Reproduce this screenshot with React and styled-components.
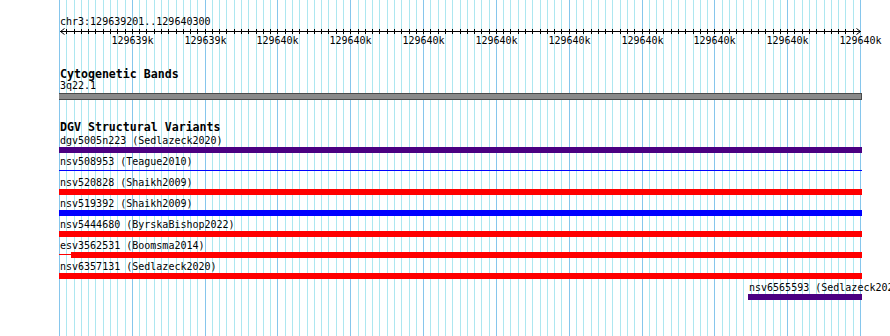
import React from 'react';
import styled, { createGlobalStyle } from 'styled-components';

const GlobalStyle = createGlobalStyle`
  html, body {
    margin: 0;
    padding: 0;
    background: #ffffff;
    overflow: hidden;
  }
  body {
    font-family: 'DejaVu Sans Mono', 'Liberation Mono', monospace;
    font-size: 10px;
    color: #000000;
  }
`;

const ORIGIN = 59;
const GRID_END = 860;
const STEPS = 110;
const TRACK_WIDTH = 803;

const gridX = (i) => Math.round(ORIGIN + (i * (GRID_END - ORIGIN)) / STEPS);

const Page = styled.div`
  position: relative;
  width: 890px;
  height: 336px;
  overflow: hidden;
  background: #ffffff;
`;

const GridLayer = styled.svg`
  position: absolute;
  left: 0;
  top: 0;
  width: 890px;
  height: 336px;
`;

const Content = styled.div`
  position: relative;
  padding: 17px 0 0 ${ORIGIN}px;
  display: flex;
  flex-direction: column;
`;

const RefLabel = styled.div`
  line-height: 10px;
  height: 11px;
  padding-left: 1px;
  white-space: nowrap;
`;

const Scale = styled.div`
  position: relative;
  width: ${TRACK_WIDTH}px;
  height: 19px;
`;

const ScaleSvg = styled.svg`
  display: block;
  width: ${TRACK_WIDTH}px;
  height: 19px;
`;

const TickLabel = styled.span`
  position: absolute;
  top: 8px;
  line-height: 10px;
  transform: translateX(-50%);
  white-space: nowrap;
`;

const Track = styled.section`
  display: flex;
  flex-direction: column;
  margin-top: 22px;
`;

const TrackTitle = styled.h2`
  margin: 0;
  font-size: 11.6px;
  font-weight: bold;
  line-height: 11px;
  height: 12px;
  padding-left: 1px;
  white-space: nowrap;
`;

const BandLabel = styled.div`
  line-height: 10px;
  height: 10px;
  padding-left: 1px;
`;

const BandBar = styled.div`
  margin-top: 2px;
  width: ${TRACK_WIDTH}px;
  height: 7px;
  box-sizing: border-box;
  background: #8a8a8a;
  border: 1px solid #4a4a4a;
  border-left: none;
`;

const Rows = styled.div`
  display: flex;
  flex-direction: column;
  margin-top: 2px;
`;

const FeatureRow = styled.div`
  display: flex;
  flex-direction: column;
  height: 21px;
`;

const FeatureLabel = styled.div`
  line-height: 10px;
  height: 10px;
  padding-left: 1px;
  white-space: nowrap;
`;

const Glyph = styled.div`
  display: flex;
  align-items: flex-start;
  height: 6px;
  margin-top: 1px;
`;

const Block = styled.div`
  height: 6px;
  flex: none;
  background: ${(p) => p.color};
`;

const Line = styled.div`
  height: 1px;
  margin-top: 2px;
  flex: none;
  background: ${(p) => p.color};
`;

const PURPLE = '#4b0082';
const RED = '#ff0000';
const BLUE = '#0000ff';

const features = [
  { name: 'dgv5005n223', study: 'Sedlazeck2020', color: PURPLE, start: 0, end: 803 },
  { name: 'nsv508953', study: 'Teague2010', color: BLUE, start: 0, end: 803, thin: true },
  { name: 'nsv520828', study: 'Shaikh2009', color: RED, start: 0, end: 803 },
  { name: 'nsv519392', study: 'Shaikh2009', color: BLUE, start: 0, end: 803 },
  { name: 'nsv5444680', study: 'ByrskaBishop2022', color: RED, start: 0, end: 803 },
  { name: 'esv3562531', study: 'Boomsma2014', color: RED, start: 0, end: 803, lead: 12 },
  { name: 'nsv6357131', study: 'Sedlazeck2020', color: RED, start: 0, end: 803 },
  { name: 'nsv6565593', study: 'Sedlazeck2020', color: PURPLE, start: 689, end: 803 },
];

const tickLabels = [
  '129639k', '129639k', '129640k', '129640k', '129640k', '129640k',
  '129640k', '129640k', '129640k', '129640k', '129640k',
];

function Grid() {
  const lines = [];
  for (let i = 0; i <= STEPS; i += 1) {
    const x = gridX(i) + 0.5;
    lines.push(
      <line
        key={i}
        x1={x}
        x2={x}
        y1={0}
        y2={336}
        stroke={i % 10 === 0 ? '#86c6ec' : '#ade7f0'}
        strokeWidth={1}
      />
    );
  }
  return (
    <GridLayer viewBox="0 0 890 336" shapeRendering="crispEdges">
      {lines}
    </GridLayer>
  );
}

function Ruler() {
  const ticks = [];
  for (let i = 1; i < STEPS; i += 1) {
    const x = gridX(i) - ORIGIN + 0.5;
    ticks.push(<line key={i} x1={x} x2={x} y1={1} y2={6} stroke="#000" />);
  }
  return (
    <>
      <RefLabel>chr3:129639201..129640300</RefLabel>
      <Scale>
        <ScaleSvg viewBox={`0 0 ${TRACK_WIDTH} 19`}>
          <g shapeRendering="crispEdges">
            <line x1={1} x2={802} y1={3.5} y2={3.5} stroke="#000" />
            {ticks}
          </g>
          <path d="M5.5 0.5 L1.5 3.5 L5.5 6.5" fill="none" stroke="#000" />
          <path d="M797.5 0.5 L801.5 3.5 L797.5 6.5" fill="none" stroke="#000" />
        </ScaleSvg>
        {tickLabels.map((label, k) => (
          <TickLabel key={k} style={{ left: gridX((k + 1) * 10) - ORIGIN + 0.5 }}>
            {label}
          </TickLabel>
        ))}
      </Scale>
    </>
  );
}

function Feature({ f }) {
  const lead = f.lead || 0;
  return (
    <FeatureRow>
      <FeatureLabel style={{ marginLeft: f.start }}>
        {f.name} ({f.study})
      </FeatureLabel>
      <Glyph style={{ marginLeft: f.start }}>
        {lead > 0 && <Line color={f.color} style={{ width: lead }} />}
        {f.thin ? (
          <Line color={f.color} style={{ width: f.end - f.start - lead }} />
        ) : (
          <Block color={f.color} style={{ width: f.end - f.start - lead }} />
        )}
      </Glyph>
    </FeatureRow>
  );
}

export default function App() {
  return (
    <Page>
      <GlobalStyle />
      <Grid />
      <Content>
        <Ruler />
        <Track>
          <TrackTitle>Cytogenetic Bands</TrackTitle>
          <BandLabel>3q22.1</BandLabel>
          <BandBar />
        </Track>
        <Track>
          <TrackTitle>DGV Structural Variants</TrackTitle>
          <Rows>
            {features.map((f) => (
              <Feature key={f.name} f={f} />
            ))}
          </Rows>
        </Track>
      </Content>
    </Page>
  );
}
